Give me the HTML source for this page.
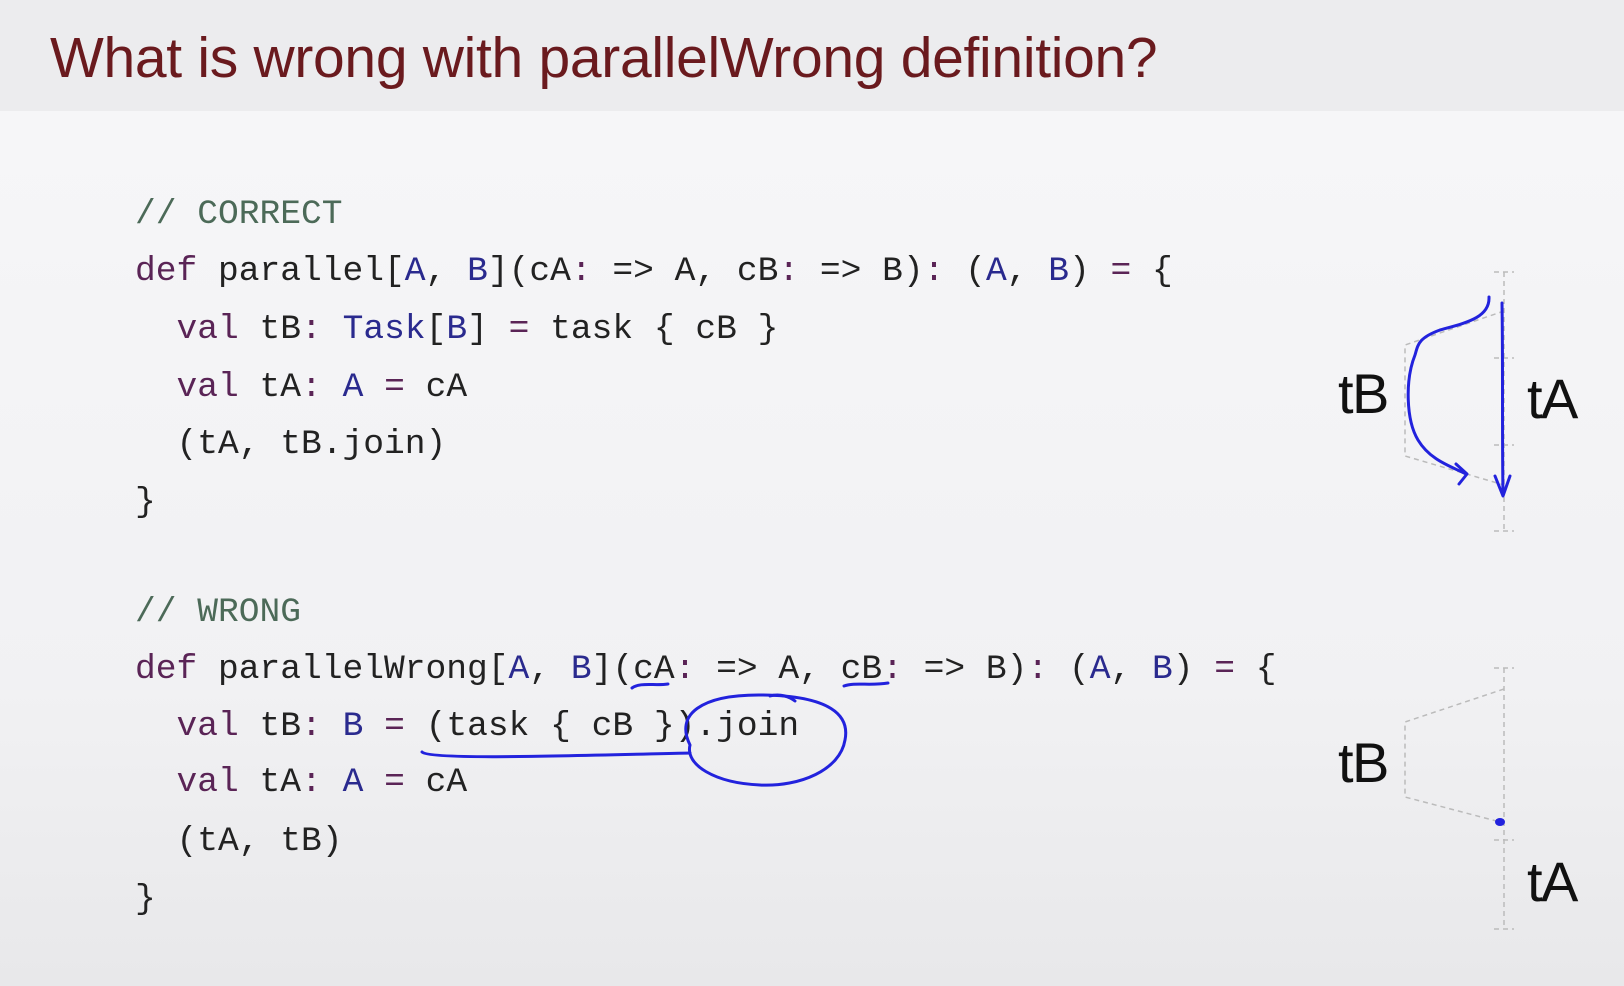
<!DOCTYPE html>
<html><head><meta charset="utf-8"><style>
html,body{margin:0;padding:0}
body{width:1624px;height:986px;overflow:hidden;position:relative;background:linear-gradient(#f7f7f9,#f1f1f3 70%,#e8e8ea);font-family:"Liberation Sans",sans-serif}
.hdr{position:absolute;left:0;top:0;width:1624px;height:111px;background:#ececee}
.title{position:absolute;left:50px;top:25px;font-size:57px;color:#6a1a1e;line-height:66px;white-space:nowrap;letter-spacing:-0.3px}
.l{position:absolute;left:135px;height:40px;line-height:40px;font-family:"Liberation Mono",monospace;font-size:34.6px;color:#222;white-space:pre}
.k{color:#5a2456}.t{color:#2a2a8e}.c{color:#4c6a58}
.lab{position:absolute;font-size:56px;color:#111;line-height:60px;letter-spacing:-1.5px}
</style></head><body>
<div class="hdr"></div>
<div class="title">What is wrong with parallelWrong definition?</div>

<div class="l c" style="top:195px">// CORRECT</div>
<div class="l" style="top:252px"><span class="k">def</span> parallel[<span class="t">A</span>, <span class="t">B</span>](cA<span class="k">:</span> =&gt; A, cB<span class="k">:</span> =&gt; B)<span class="k">:</span> (<span class="t">A</span>, <span class="t">B</span>) <span class="k">=</span> {</div>
<div class="l" style="top:310px">  <span class="k">val</span> tB<span class="k">:</span> <span class="t">Task</span>[<span class="t">B</span>] <span class="k">=</span> task { cB }</div>
<div class="l" style="top:368px">  <span class="k">val</span> tA<span class="k">:</span> <span class="t">A</span> <span class="k">=</span> cA</div>
<div class="l" style="top:425px">  (tA, tB.join)</div>
<div class="l" style="top:483px">}</div>

<div class="l c" style="top:593px">// WRONG</div>
<div class="l" style="top:650px"><span class="k">def</span> parallelWrong[<span class="t">A</span>, <span class="t">B</span>](cA<span class="k">:</span> =&gt; A, cB<span class="k">:</span> =&gt; B)<span class="k">:</span> (<span class="t">A</span>, <span class="t">B</span>) <span class="k">=</span> {</div>
<div class="l" style="top:707px">  <span class="k">val</span> tB<span class="k">:</span> <span class="t">B</span> <span class="k">=</span> (task { cB }).join</div>
<div class="l" style="top:763px">  <span class="k">val</span> tA<span class="k">:</span> <span class="t">A</span> <span class="k">=</span> cA</div>
<div class="l" style="top:822px">  (tA, tB)</div>
<div class="l" style="top:880px">}</div>

<div class="lab" style="left:1338px;top:364px">tB</div>
<div class="lab" style="left:1527px;top:369px">tA</div>
<div class="lab" style="left:1338px;top:733px">tB</div>
<div class="lab" style="left:1527px;top:852px">tA</div>

<svg style="position:absolute;left:0;top:0" width="1624" height="986">
<g stroke="#bbb" stroke-width="1.5" stroke-dasharray="5,4" fill="none">
<line x1="1504" y1="272" x2="1504" y2="531"/>
<line x1="1494" y1="272" x2="1514" y2="272"/><line x1="1494" y1="531" x2="1514" y2="531"/>
<line x1="1494" y1="358" x2="1514" y2="358"/><line x1="1494" y1="445" x2="1514" y2="445"/>
<polyline points="1504,311 1405,345 1405,456 1504,485"/>
<line x1="1504" y1="668" x2="1504" y2="929"/>
<line x1="1494" y1="668" x2="1514" y2="668"/><line x1="1494" y1="929" x2="1514" y2="929"/>
<line x1="1494" y1="840" x2="1514" y2="840"/>
<polyline points="1504,689 1405,722 1405,797 1504,823"/>
</g>
<g stroke="#2222dd" stroke-width="3" fill="none" stroke-linecap="round" stroke-linejoin="round">
<path d="M1489,297 C1490,318 1465,323 1440,330 C1418,338 1418,345 1415,355 C1405,380 1406,420 1418,440 C1430,460 1450,466 1466,474"/>
<path d="M1456,464 L1467,474 L1459,484"/>
<path d="M1502,303 C1503,360 1502,430 1503,495"/>
<path d="M1495,476 L1503,496 L1510,476"/>
<path d="M632,688 C640,682 655,686 668,684"/>
<path d="M844,686 C855,682 870,686 888,683"/>
<path d="M422,752 C430,760 560,756 690,753"/>
<path d="M690,745 C675,715 700,694 763,695 C830,696 850,715 845,740 C840,770 800,787 760,785 C715,783 685,765 690,745"/>
<path d="M770,696 C780,693 790,697 795,701"/>
</g>
<ellipse cx="1500" cy="822" rx="5" ry="4" fill="#2222dd"/>
</svg>
</body></html>
